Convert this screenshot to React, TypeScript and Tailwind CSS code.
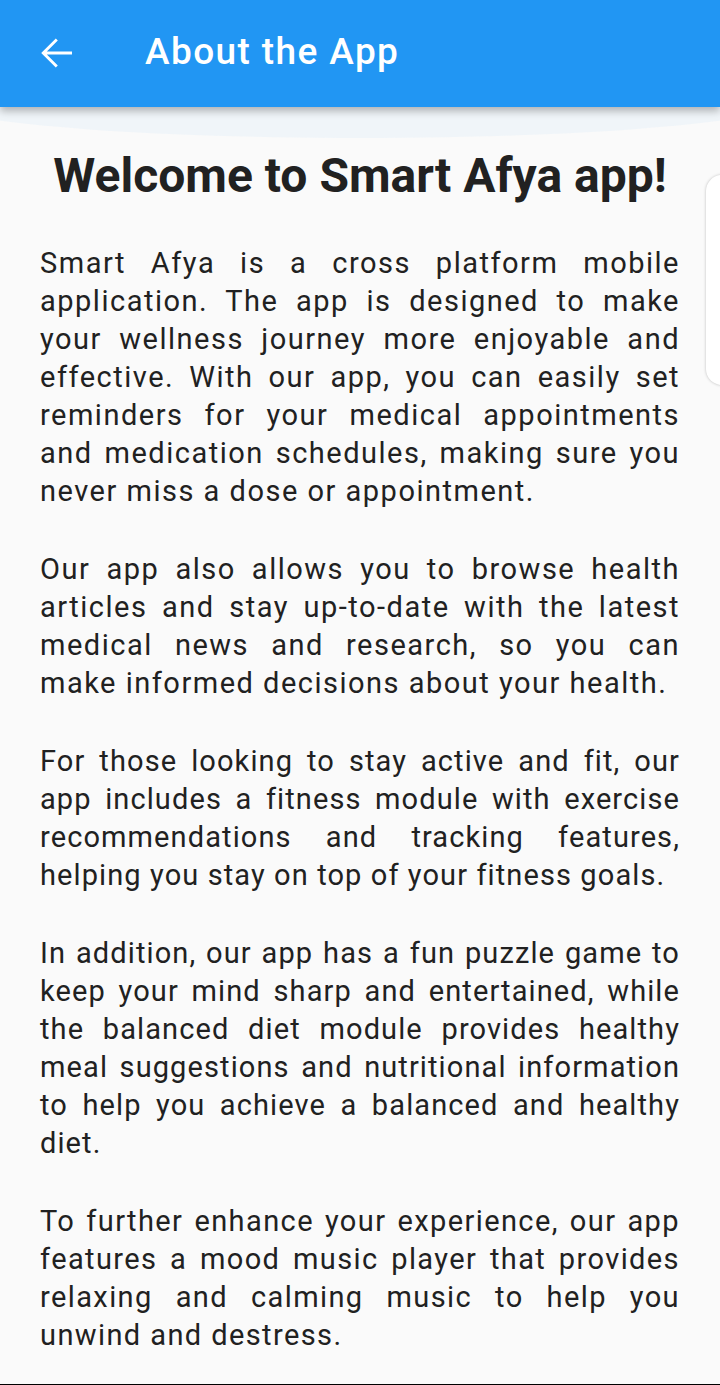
import React from "react";

// tracking differs a touch per block so the lines break where the app's do
const paragraphs = [
  {
    text: "Smart Afya is a cross platform mobile application. The app is designed to make your wellness journey more enjoyable and effective. With our app, you can easily set reminders for your medical appointments and medication schedules, making sure you never miss a dose or appointment.",
    cls: "tracking-[1.5px]",
  },
  {
    text: "Our app also allows you to browse health articles and stay up-to-date with the latest medical news and research, so you can make informed decisions about your health.",
    cls: "tracking-[1.5px]",
  },
  {
    text: "For those looking to stay active and fit, our app includes a fitness module with exercise recommendations and tracking features, helping you stay on top of your fitness goals.",
    cls: "tracking-[1.1px]",
  },
  {
    text: "In addition, our app has a fun puzzle game to keep your mind sharp and entertained, while the balanced diet module provides healthy meal suggestions and nutritional information to help you achieve a balanced and healthy diet.",
    cls: "tracking-[1.1px]",
  },
  {
    text: "To further enhance your experience, our app features a mood music player that provides relaxing and calming music to help you unwind and destress.",
    cls: "tracking-[1.4px]",
  },
];

export default function App() {
  return (
    <div className="relative h-[1385px] w-[720px] overflow-hidden bg-[#fafafa] font-['Roboto',sans-serif] border-b border-black">
      {/* app bar */}
      <header className="relative z-10 flex h-[107px] items-center bg-[#2196F3] shadow-[0_4px_8px_rgba(0,0,0,0.28)]">
        <button className="ml-[32px] mb-[2px] flex h-[48px] w-[48px] items-center justify-center text-white">
          <svg width="48" height="48" viewBox="0 0 24 24" fill="currentColor">
            <path d="M20 11.2H7.4l5.5-5.5-1-1L4.6 12l7.3 7.3 1-1-5.5-5.5H20z" />
          </svg>
        </button>
        <h1 className="ml-[65px] mb-[4px] text-[37px] font-medium leading-none tracking-[1.4px] text-white">
          About the App
        </h1>
      </header>

      {/* overscroll glow */}
      <div className="pointer-events-none absolute left-[-10%] top-[60px] h-[78px] w-[120%] rounded-[50%] bg-[#eef4f9] opacity-80" />

      {/* side tab */}
      <div className="absolute right-[-20px] top-[175px] h-[210px] w-[34px] rounded-[16px] bg-white shadow-[0_0_3px_rgba(0,0,0,0.25)]" />

      <main className="relative px-[40px] pt-[41px] text-[#212121]">
        <h2 className="text-center text-[48px] font-bold leading-[56px]">
          Welcome to Smart Afya app!
        </h2>
        <div className="mt-[40px] flex flex-col gap-[40px]">
          {paragraphs.map((p) => (
            <p
              key={p.text.slice(0, 12)}
              className={"text-justify text-[29px] leading-[38px] " + p.cls}
            >
              {p.text}
            </p>
          ))}
        </div>
      </main>
    </div>
  );
}
